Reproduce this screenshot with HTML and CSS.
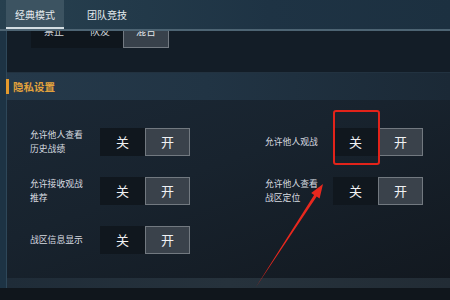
FILE: index.html
```html
<!DOCTYPE html>
<html lang="zh-CN">
<head>
  <meta charset="UTF-8">
  <title>隐私设置</title>
  <link rel="stylesheet" href="styles.css">
</head>
<body>
  <div class="screen">
    <div class="tabs">
      <div class="tab active">经典模式</div>
      <div class="tab">团队竞技</div>
    </div>

    <div class="panel">
      <div class="mode-band">
        <div class="mode-seg"><span>禁止</span></div>
        <div class="mode-seg"><span>队友</span></div>
        <div class="mode-seg selected"><span>混合</span></div>
      </div>

      <div class="section-head">
        <span class="bar"></span>
        <span class="title">隐私设置</span>
      </div>

      <div class="settings">
        <div class="setting">
          <div class="label">允许他人查看<br>历史战绩</div>
          <div class="toggle">
            <div class="off">关</div>
            <div class="on">开</div>
          </div>
        </div>
        <div class="setting right">
          <div class="label">允许他人观战</div>
          <div class="toggle">
            <div class="off">关<span class="highlight"></span></div>
            <div class="on">开</div>
          </div>
        </div>
        <div class="setting">
          <div class="label">允许接收观战<br>推荐</div>
          <div class="toggle">
            <div class="off">关</div>
            <div class="on">开</div>
          </div>
        </div>
        <div class="setting right">
          <div class="label">允许他人查看<br>战区定位</div>
          <div class="toggle">
            <div class="off">关</div>
            <div class="on">开</div>
          </div>
        </div>
        <div class="setting">
          <div class="label">战区信息显示</div>
          <div class="toggle">
            <div class="off">关</div>
            <div class="on">开</div>
          </div>
        </div>
      </div>

      <div class="footer-band"></div>
    </div>
    <div class="bottom"></div>

    <!-- annotation arrow drawn over the screenshot -->
    <svg class="arrow" width="450" height="300" viewBox="0 0 450 300">
      <polygon points="256,287 314.1,194.9 311.2,193 323,184 319.6,198.4 316.7,196.5" fill="#e8281e"/>
    </svg>
  </div>
</body>
</html>
```

FILE: styles.css
```css
body {
  margin: 0;
  font-family: "Noto Sans CJK SC", "Noto Sans", sans-serif;
  background-color: #0f151b;
}
.screen {
  position: relative;
  width: 450px;
  height: 300px;
  overflow: hidden;
  background: linear-gradient(90deg, #1d3344 0, #1d3344 6px, #18232e 6px);
}
.tabs {
  display: flex;
  height: 29px;
  padding-left: 6px;
  background: linear-gradient(90deg, #27404f, #1e3344 60%, #1c3040);
  border-bottom: 2px solid #4d6473;
}
.tab {
  width: 58px;
  text-align: center;
  font-size: 10px;
  line-height: 29px;
  color: #e4eaee;
  margin-right: 14px;
}
.tab.active {
  background-color: #3c5361;
  box-shadow: inset 0 -2px 0 #d3dde2;
}
.panel {
  margin-left: 6px;
  border-left: 1px solid #2e4759;
  height: 257px;
  background: linear-gradient(160deg, #1c2a38 0%, #18232e 50%, #12181f 100%);
  display: flex;
  flex-direction: column;
}
.mode-band {
  height: 41px;
  background-color: #131d27;
  display: flex;
  align-items: flex-start;
  padding-left: 24px;
  border-bottom: 1px solid #223240;
}
.mode-seg {
  width: 46px;
  height: 17px;
  background-color: #0f161d;
  overflow: hidden;
  text-align: center;
  color: #cfd5da;
  font-size: 10px;
  box-sizing: border-box;
}
.mode-seg span {
  display: block;
  margin-top: -7px;
  line-height: 14px;
}
.mode-seg.selected {
  background-color: #38414b;
  border: 1px solid #737a82;
  border-top: none;
  color: #e2e6ea;
}
.section-head {
  height: 27px;
  display: flex;
  align-items: center;
  background: linear-gradient(90deg, #25394a 0%, #213444 45%, #1b2936 100%);
}
.bar {
  width: 3px;
  height: 15px;
  background-color: #e39a2d;
  margin-left: -1px;
}
.title {
  margin-left: 4px;
  font-size: 10.5px;
  font-weight: bold;
  color: #e3a23c;
}
.settings {
  flex: 1;
  display: grid;
  grid-template-columns: 235px 1fr;
  grid-auto-rows: 28px;
  row-gap: 21px;
  align-content: start;
  padding-top: 28px;
  padding-left: 23px;
}
.setting {
  display: flex;
  align-items: center;
}
.label {
  width: 70px;
  font-size: 8.8px;
  line-height: 14px;
  color: #d8dce0;
}
.setting.right .label {
  width: 68px;
}
.toggle {
  display: flex;
  height: 28px;
}
.off, .on {
  width: 45px;
  box-sizing: border-box;
  text-align: center;
  line-height: 28px;
  font-size: 13px;
  color: #f0f2f4;
}
.off {
  position: relative;
  background-color: #10171e;
}
.on {
  background-color: #3a424b;
  border: 1px solid #727980;
  line-height: 26px;
}
.highlight {
  position: absolute;
  left: 0;
  top: -18px;
  width: 47px;
  height: 55px;
  box-sizing: border-box;
  border: 2px solid #e2231a;
  border-radius: 3px;
}
.footer-band {
  height: 10px;
  background: linear-gradient(90deg, #1f2c38, #26323c 50%, #222c35);
}
.bottom {
  height: 12px;
  background-color: #10161c;
}
.arrow {
  position: absolute;
  left: 0;
  top: 0;
}
```
